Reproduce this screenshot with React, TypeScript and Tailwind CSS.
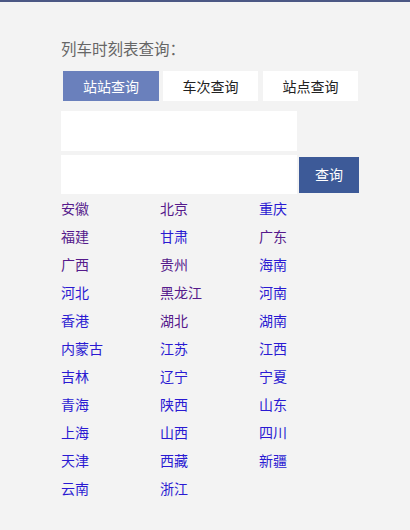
const provinces: { name: string; visited?: boolean }[] = [
  { name: "安徽", visited: true },
  { name: "北京", visited: true },
  { name: "重庆" },
  { name: "福建", visited: true },
  { name: "甘肃" },
  { name: "广东", visited: true },
  { name: "广西", visited: true },
  { name: "贵州", visited: true },
  { name: "海南" },
  { name: "河北" },
  { name: "黑龙江", visited: true },
  { name: "河南" },
  { name: "香港" },
  { name: "湖北", visited: true },
  { name: "湖南" },
  { name: "内蒙古" },
  { name: "江苏" },
  { name: "江西" },
  { name: "吉林" },
  { name: "辽宁" },
  { name: "宁夏" },
  { name: "青海" },
  { name: "陕西" },
  { name: "山东" },
  { name: "上海" },
  { name: "山西" },
  { name: "四川" },
  { name: "天津" },
  { name: "西藏" },
  { name: "新疆" },
  { name: "云南" },
  { name: "浙江" },
];

export default function App() {
  return (
    <div
      className="min-h-[530px] bg-[#f3f3f3] border-t-2 border-[#4b5784]"
      style={{ fontFamily: '"Microsoft YaHei", "Noto Sans CJK SC", sans-serif' }}
    >
      <div className="pl-[61px] pt-[34px]">
        <h2 className="text-[15.5px] leading-[24px] text-[#666]">列车时刻表查询：</h2>

        <div className="flex mt-[11px] text-[14px]">
          <button className="w-[96px] h-[30px] ml-[2px] bg-[#6a80bc] text-white">站站查询</button>
          <button className="w-[95px] h-[30px] ml-[4px] bg-white text-[#222]">车次查询</button>
          <button className="w-[95px] h-[30px] ml-[5px] bg-white text-[#222]">站点查询</button>
        </div>

        <input className="block mt-[10px] w-[236px] h-[40px] bg-white outline-none" />
        <div className="flex items-center mt-[4px]">
          <input className="block w-[236px] h-[39px] bg-white outline-none" />
          <button className="ml-[2px] w-[60px] h-[36px] bg-[#3d5a98] text-white text-[14px]">查询</button>
        </div>

        <div className="grid grid-cols-[99px_99px_99px] text-[14px]">
          {provinces.map((p) => (
            <a
              key={p.name}
              href="#"
              className={`h-[28px] leading-[28px] ${p.visited ? "text-[#551a8b]" : "text-[#2a1ad2]"}`}
            >
              {p.name}
            </a>
          ))}
        </div>
      </div>
    </div>
  );
}
